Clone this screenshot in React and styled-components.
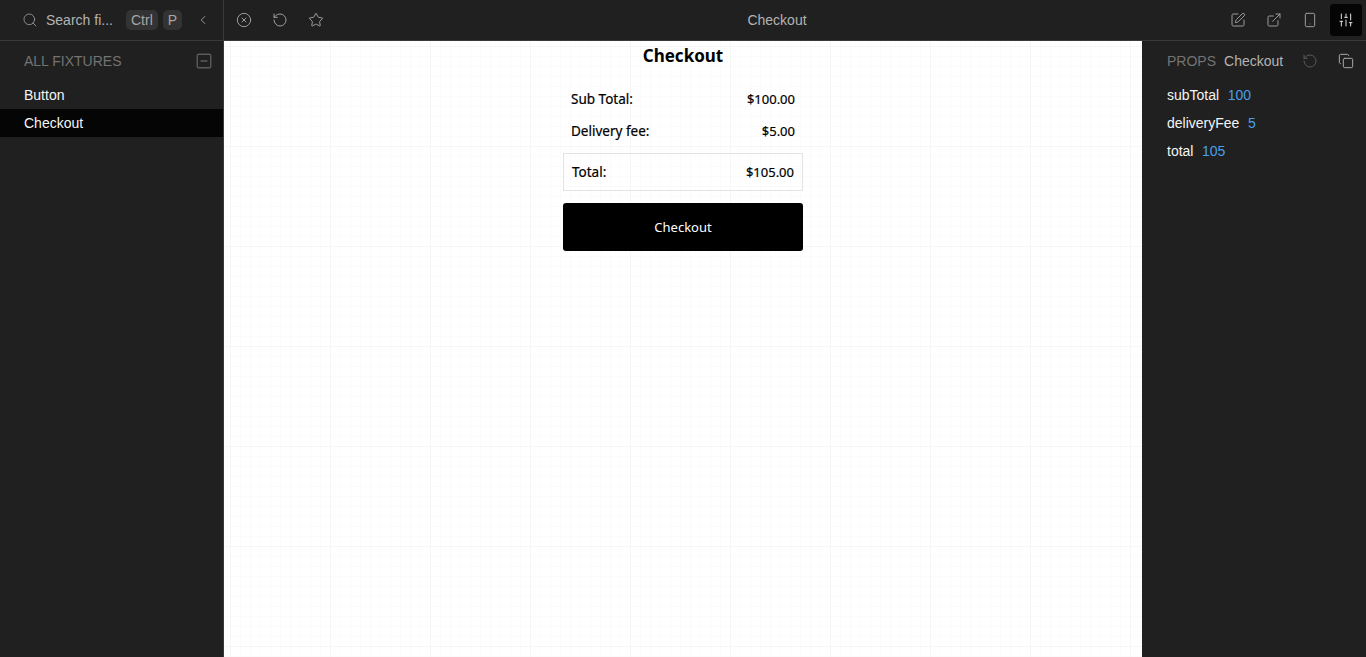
import React from 'react';
import styled, { createGlobalStyle } from 'styled-components';
import {
    Search,
    ChevronLeft,
    CircleX,
    RotateCcw,
    Star,
    SquarePen,
    ExternalLink,
    Smartphone,
    SlidersVertical,
    SquareMinus,
    Copy,
} from 'lucide-react';

const fixtures = [
    { name: 'Button', active: false },
    { name: 'Checkout', active: true },
];

const props = [
    { name: 'subTotal', value: '100' },
    { name: 'deliveryFee', value: '5' },
    { name: 'total', value: '105' },
];

const App = () => {
    return (
        <>
            <GlobalStyle />
            <Shell>
                <Sidebar>
                    <SearchBar>
                        <Search size={16} strokeWidth={1.5} color="#8c8c8c" />
                        <SearchText>Search fi...</SearchText>
                        <Key>Ctrl</Key>
                        <Key>P</Key>
                        <CollapseButton>
                            <ChevronLeft size={14} strokeWidth={1.5} />
                        </CollapseButton>
                    </SearchBar>
                    <SectionHead>
                        <SectionTitle>ALL FIXTURES</SectionTitle>
                        <SquareMinus size={18} strokeWidth={1.9} color="#5a5a5a" />
                    </SectionHead>
                    {fixtures.map((fixture) => (
                        <FixtureRow key={fixture.name} $active={fixture.active}>
                            {fixture.name}
                        </FixtureRow>
                    ))}
                </Sidebar>
                <Main>
                    <TopBar>
                        <ToolGroup>
                            <ToolButton><CircleX size={16} strokeWidth={1.4} /></ToolButton>
                            <ToolButton><RotateCcw size={16} strokeWidth={1.4} /></ToolButton>
                            <ToolButton><Star size={16} strokeWidth={1.4} /></ToolButton>
                        </ToolGroup>
                        <TopTitle>Checkout</TopTitle>
                        <ToolGroup>
                            <ToolButton><SquarePen size={16} strokeWidth={1.4} /></ToolButton>
                            <ToolButton><ExternalLink size={16} strokeWidth={1.4} /></ToolButton>
                            <ToolButton><Smartphone size={16} strokeWidth={1.4} /></ToolButton>
                            <ToolButton $active><SlidersVertical size={16} strokeWidth={1.4} /></ToolButton>
                        </ToolGroup>
                    </TopBar>
                    <Body>
                        <Canvas>
                            <Summary>
                                <Heading>Checkout</Heading>
                                <LineList>
                                    <Line>
                                        <LineLabel>Sub Total:</LineLabel>
                                        <LineValue>$100.00</LineValue>
                                    </Line>
                                    <Line>
                                        <LineLabel>Delivery fee:</LineLabel>
                                        <LineValue>$5.00</LineValue>
                                    </Line>
                                </LineList>
                                <TotalBox>
                                    <LineLabel>Total:</LineLabel>
                                    <LineValue>$105.00</LineValue>
                                </TotalBox>
                                <CheckoutButton>Checkout</CheckoutButton>
                            </Summary>
                        </Canvas>
                        <PropsPanel>
                            <PropsHead>
                                <SectionTitle>PROPS</SectionTitle>
                                <PropsName>Checkout</PropsName>
                                <PropsIcons>
                                    <RotateCcw size={16} strokeWidth={1.4} color="#5c5c5c" />
                                    <Copy size={16} strokeWidth={1.4} color="#b3b3b3" />
                                </PropsIcons>
                            </PropsHead>
                            {props.map((prop) => (
                                <PropRow key={prop.name}>
                                    <span>{prop.name}</span>
                                    <PropValue>{prop.value}</PropValue>
                                </PropRow>
                            ))}
                        </PropsPanel>
                    </Body>
                </Main>
            </Shell>
        </>
    );
};

export default App;

const GlobalStyle = createGlobalStyle`
    html, body {
        margin: 0;
        height: 100%;
        overflow: hidden;
        background: #202020;
    }

    #root {
        height: 100%;
    }
`;

const Shell = styled.div`
    display: flex;
    width: 1366px;
    height: 657px;
    background: #202020;
    font-family: 'Liberation Sans', Arial, sans-serif;
    font-size: 14px;
    color: #f2f2f2;
`;

const Sidebar = styled.aside`
    width: 224px;
    flex: none;
    box-sizing: border-box;
    border-right: 1px solid #3a3a3a;
`;

const SearchBar = styled.div`
    height: 41px;
    box-sizing: border-box;
    display: flex;
    align-items: center;
    padding: 0 0 1px 22px;
    border-bottom: 1px solid #3a3a3a;
    margin-right: -1px;
`;

const SearchText = styled.span`
    margin-left: 8px;
    width: 80px;
    color: #b3b3b3;
    white-space: nowrap;
`;

const Key = styled.span`
    height: 20px;
    line-height: 20px;
    padding: 0 5px;
    margin-right: 5px;
    border-radius: 5px;
    background: #333;
    color: #a6a6a6;
`;

const CollapseButton = styled.span`
    display: flex;
    margin-left: 9px;
    color: #a6a6a6;
`;

const SectionHead = styled.div`
    height: 40px;
    display: flex;
    align-items: center;
    justify-content: space-between;
    padding: 0 10px 0 24px;
`;

const SectionTitle = styled.span`
    color: #737373;
`;

const FixtureRow = styled.div`
    height: 28px;
    line-height: 28px;
    padding-left: 24px;
    background: ${(p) => (p.$active ? '#050505' : 'transparent')};
    color: #f5f5f5;
`;

const Main = styled.div`
    flex: 1;
    min-width: 0;
    display: flex;
    flex-direction: column;
`;

const TopBar = styled.header`
    height: 41px;
    flex: none;
    box-sizing: border-box;
    display: flex;
    align-items: center;
    padding: 0 4px;
    border-bottom: 1px solid #3a3a3a;
`;

const ToolGroup = styled.div`
    display: flex;
    align-items: center;
    gap: 4px;
`;

const ToolButton = styled.span`
    width: 32px;
    height: 32px;
    display: flex;
    align-items: center;
    justify-content: center;
    border-radius: 3px;
    color: ${(p) => (p.$active ? '#f0f0f0' : '#a6a6a6')};
    background: ${(p) => (p.$active ? '#050505' : 'transparent')};
`;

const TopTitle = styled.span`
    flex: 1;
    text-align: center;
    color: #b3b3b3;
`;

const Body = styled.div`
    flex: 1;
    min-height: 0;
    display: flex;
`;

const Canvas = styled.main`
    flex: 1;
    min-width: 0;
    background-color: #fff;
    background-image:
        linear-gradient(to right, #f6f6f6 1px, transparent 1px),
        linear-gradient(to bottom, #f6f6f6 1px, transparent 1px),
        linear-gradient(to right, #fbfbfb 1px, transparent 1px),
        linear-gradient(to bottom, #fbfbfb 1px, transparent 1px);
    background-size: 100px 100px, 100px 100px, 10px 10px, 10px 10px;
    background-position: 6px 5px, 6px 5px, 6px 5px, 6px 5px;
    display: flex;
    justify-content: center;
    font-family: 'Noto Sans', 'Open Sans', sans-serif;
    color: #000;
`;

const Summary = styled.section`
    width: 240px;
    display: flex;
    flex-direction: column;
`;

const Heading = styled.h2`
    margin: 0;
    height: 30px;
    line-height: 30px;
    text-align: center;
    font-size: 17px;
    font-weight: 700;
`;

const LineList = styled.div`
    margin-top: 16px;
    display: flex;
    flex-direction: column;
    gap: 8px;
`;

const Line = styled.div`
    box-sizing: border-box;
    height: 24px;
    display: flex;
    align-items: center;
    justify-content: space-between;
    padding: 0 8px;
`;

const LineLabel = styled.span`
    font-size: 13.5px;
    -webkit-text-stroke: 0.2px #000;
`;

const LineValue = styled.span`
    font-size: 13px;
    -webkit-text-stroke: 0.2px #000;
`;

const TotalBox = styled(Line)`
    height: 38px;
    margin-top: 10px;
    border: 1px solid #e3e3e3;
`;

const CheckoutButton = styled.button`
    height: 48px;
    margin-top: 12px;
    padding: 0;
    border: 0;
    border-radius: 3px;
    background: #000;
    color: #fff;
    font: inherit;
    font-size: 13px;
`;

const PropsPanel = styled.aside`
    width: 224px;
    flex: none;
    background: #202020;
`;

const PropsHead = styled.div`
    height: 40px;
    display: flex;
    align-items: center;
    padding: 0 12px 0 25px;
`;

const PropsName = styled.span`
    margin-left: 8px;
    color: #b3b3b3;
`;

const PropsIcons = styled.span`
    margin-left: auto;
    display: flex;
    gap: 20px;
`;

const PropRow = styled.div`
    height: 28px;
    display: flex;
    align-items: center;
    gap: 8.5px;
    padding-left: 25px;
    color: #f5f5f5;
`;

const PropValue = styled.span`
    color: #4a9fe8;
`;
